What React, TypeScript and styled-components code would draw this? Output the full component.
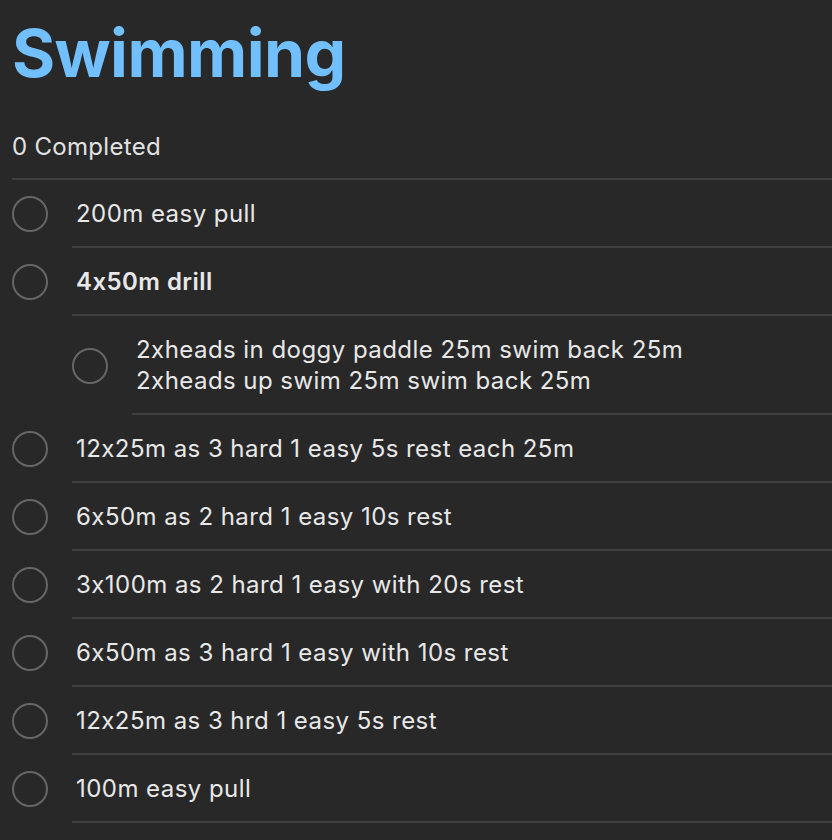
import styled, { createGlobalStyle } from "styled-components";

const GlobalStyle = createGlobalStyle`
    html, body {
        margin: 0;
        padding: 0;
        background-color: #282828;
    }
    body {
        font-family: Inter, "Noto Sans", sans-serif;
        font-feature-settings: "calt" 0;
        color: #e4e4e4;
    }
`;

interface Task {
    lines: string[];
    bold?: boolean;
    children?: Task[];
}

const tasks: Task[] = [
    { lines: ["200m easy pull"] },
    {
        lines: ["4x50m drill"],
        bold: true,
        children: [
            {
                lines: [
                    "2xheads in doggy paddle 25m swim back 25m",
                    "2xheads up swim 25m swim back 25m",
                ],
            },
        ],
    },
    { lines: ["12x25m as 3 hard 1 easy 5s rest each 25m"] },
    { lines: ["6x50m as 2 hard 1 easy 10s rest"] },
    { lines: ["3x100m as 2 hard 1 easy with 20s rest"] },
    { lines: ["6x50m as 3 hard 1 easy with 10s rest"] },
    { lines: ["12x25m as 3 hrd 1 easy 5s rest"] },
    { lines: ["100m easy pull"] },
];

const Page = styled.div`
    width: 832px;
    height: 840px;
    overflow: hidden;
    padding-left: 12px;
    box-sizing: border-box;
    background-color: #282828;
`;

const Title = styled.h1`
    margin: 0;
    padding-top: 12px;
    font-size: 66px;
    line-height: 82px;
    font-weight: 700;
    color: #72bffd;
    letter-spacing: -0.6px;
`;

const Summary = styled.div`
    height: 86px;
    padding-top: 38px;
    font-size: 24px;
    line-height: 29px;
    letter-spacing: 0.3px;
    color: #e2e2e2;
    border-bottom: 2px solid #404040;
    box-sizing: border-box;
`;

const Row = styled.div<{ $indent: number }>`
    display: flex;
    align-items: stretch;
    padding-left: ${(p) => p.$indent}px;
`;

const CheckCell = styled.div`
    width: 60px;
    flex: none;
    display: flex;
    align-items: center;
`;

const Circle = styled.span`
    width: 32px;
    height: 32px;
    border-radius: 50%;
    border: 2px solid #666666;
    box-sizing: content-box;
`;

const Content = styled.div<{ $bold?: boolean }>`
    flex: 1;
    min-height: 68px;
    padding: 17.5px 4px;
    box-sizing: border-box;
    display: flex;
    flex-direction: column;
    justify-content: center;
    border-bottom: 2px solid #404040;
    font-size: 24px;
    line-height: 31px;
    letter-spacing: 0.45px;
    font-weight: ${(p) => (p.$bold ? 600 : 400)};
    color: #e8e8e8;
`;

const TaskRow = ({ task, indent }: { task: Task; indent: number }) => (
    <>
        <Row $indent={indent}>
            <CheckCell>
                <Circle />
            </CheckCell>
            <Content $bold={task.bold}>
                {task.lines.map((l) => (
                    <span key={l}>{l}</span>
                ))}
            </Content>
        </Row>
        {task.children?.map((c) => (
            <TaskRow key={c.lines[0]} task={c} indent={indent + 60} />
        ))}
    </>
);

export default function App() {
    return (
        <Page>
            <GlobalStyle />
            <Title>Swimming</Title>
            <Summary>0 Completed</Summary>
            {tasks.map((t) => (
                <TaskRow key={t.lines[0]} task={t} indent={0} />
            ))}
        </Page>
    );
}
